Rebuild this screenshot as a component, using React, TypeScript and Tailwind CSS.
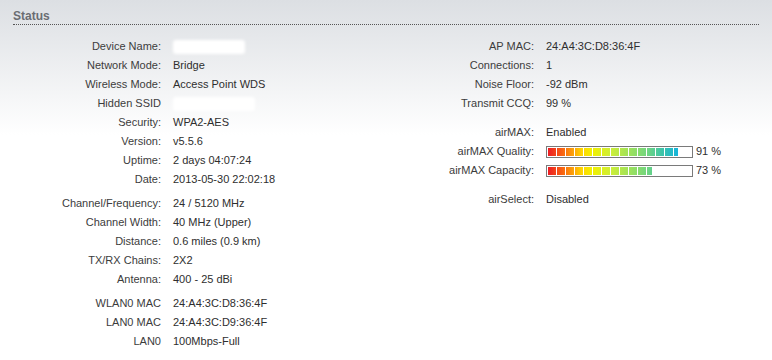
import React from "react";

type Row = { label: string; value?: string; hidden?: number; bar?: number; gap?: string };

const left: Row[] = [
  { label: "Device Name:", hidden: 72 },
  { label: "Network Mode:", value: "Bridge" },
  { label: "Wireless Mode:", value: "Access Point WDS" },
  { label: "Hidden SSID", hidden: 82 },
  { label: "Security:", value: "WPA2-AES" },
  { label: "Version:", value: "v5.5.6" },
  { label: "Uptime:", value: "2 days 04:07:24" },
  { label: "Date:", value: "2013-05-30 22:02:18" },
  { label: "Channel/Frequency:", value: "24 / 5120 MHz", gap: "mt-[5px]" },
  { label: "Channel Width:", value: "40 MHz (Upper)" },
  { label: "Distance:", value: "0.6 miles (0.9 km)" },
  { label: "TX/RX Chains:", value: "2X2" },
  { label: "Antenna:", value: "400 - 25 dBi" },
  { label: "WLAN0 MAC", value: "24:A4:3C:D8:36:4F", gap: "mt-[5px]" },
  { label: "LAN0 MAC", value: "24:A4:3C:D9:36:4F" },
  { label: "LAN0", value: "100Mbps-Full" },
];

const right: Row[] = [
  { label: "AP MAC:", value: "24:A4:3C:D8:36:4F" },
  { label: "Connections:", value: "1" },
  { label: "Noise Floor:", value: "-92 dBm" },
  { label: "Transmit CCQ:", value: "99 %" },
  { label: "airMAX:", value: "Enabled", gap: "mt-[10px]" },
  { label: "airMAX Quality:", bar: 91 },
  { label: "airMAX Capacity:", bar: 73 },
  { label: "airSelect:", value: "Disabled", gap: "mt-[10px]" },
];

function Meter({ pct }: { pct: number }) {
  return (
    <div className="flex items-center">
      <div className="h-[12px] w-[147px] border border-[#7a7a7a] bg-white p-px">
        {/* fill width comes from the percentage */}
        <div className="h-[8px] overflow-hidden" style={{ width: `${pct}%` }}>
          <div className="h-[8px] w-[143px] [background:repeating-linear-gradient(to_right,transparent_0,transparent_8px,#ffffff_8px,#ffffff_9px),linear-gradient(to_right,#ec1c24,#fa6a10_11%,#ffd800_24%,#f2f000_31%,#cdee38_44%,#9ee25a_57%,#6ed482_70%,#3cc4aa_80%,#14b4dc_91%,#10acec_100%)]" />
        </div>
      </div>
      <span className="ml-[3px]">{pct} %</span>
    </div>
  );
}

function Column({ rows }: { rows: Row[] }) {
  return (
    <div className="flex flex-col">
      {rows.map((r) => (
        <div key={r.label} className={`flex h-[19px] items-center ${r.gap ?? ""}`}>
          <div className="w-[148px] shrink-0 text-right text-[#3c3c3c]">{r.label}</div>
          <div className="pl-[12px] text-[#2e2e2e]">
            {r.hidden ? (
              <div className="relative h-[14px]" style={{ width: r.hidden }}>
                <div className="absolute inset-0 rounded-[3px] bg-white blur-[1.5px]" />
              </div>
            ) : r.bar !== undefined ? (
              <Meter pct={r.bar} />
            ) : (
              r.value
            )}
          </div>
        </div>
      ))}
    </div>
  );
}

export default function App() {
  return (
    <div className="h-[360px] w-[772px] overflow-hidden bg-[linear-gradient(to_bottom,#dcdfe3,#ffffff_135px)] font-['Liberation_Sans',Arial,sans-serif] text-[11px]">
      <div className="px-[13px] pt-[9px]">
        <div className="border-b border-dotted border-[#555] pb-[1px] text-[12px] font-bold leading-[14px] text-[#6a6d72]">
          Status
        </div>
        <div className="mt-[12px] flex">
          <div className="w-[373px]">
            <Column rows={left} />
          </div>
          <div>
            <Column rows={right} />
          </div>
        </div>
      </div>
    </div>
  );
}
